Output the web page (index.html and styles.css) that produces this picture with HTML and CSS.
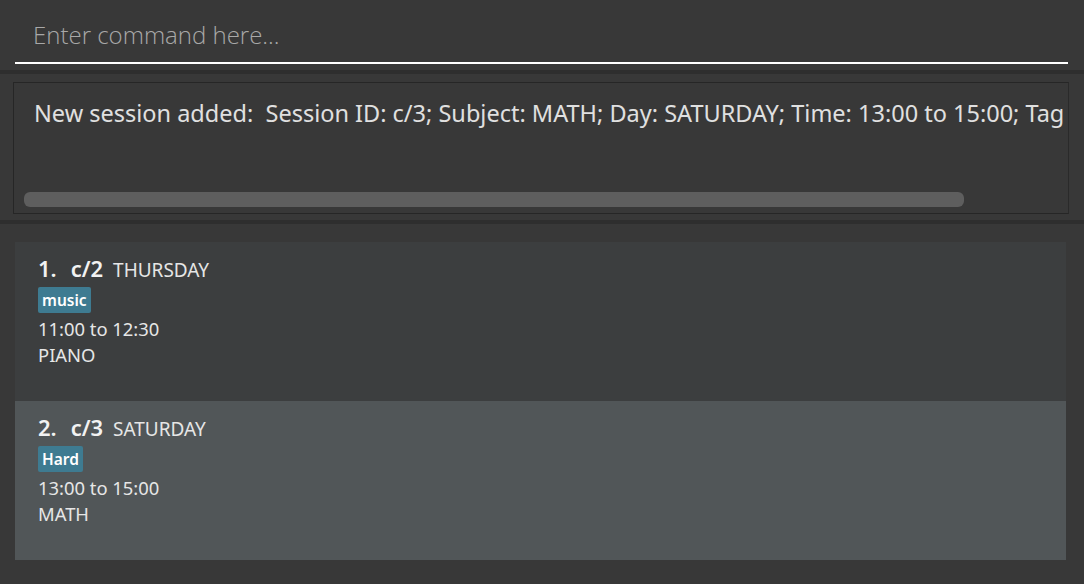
FILE: index.html
```html
<!DOCTYPE html>
<html>
<head>
<meta charset="utf-8">
<link rel="stylesheet" href="styles.css">
</head>
<body>
<div class="app">
  <div class="command-pane">
    <div class="command-field">Enter command here...</div>
  </div>
  <div class="separator"></div>
  <div class="result-pane">
    <div class="result-box">
      <div class="result-text">New session added:&nbsp; Session ID: c/3; Subject: MATH; Day: SATURDAY; Time: 13:00 to 15:00; Tag</div>
      <div class="scroll-track"><div class="scroll-thumb"></div></div>
    </div>
  </div>
  <div class="separator"></div>
  <div class="list-pane">
    <div class="card">
      <div class="card-title"><span class="idx">1.</span><span class="sid">c/2</span><span class="day">THURSDAY</span></div>
      <div class="tags"><span class="tag">music</span></div>
      <div class="line">11:00 to 12:30</div>
      <div class="line">PIANO</div>
    </div>
    <div class="card selected">
      <div class="card-title"><span class="idx">2.</span><span class="sid">c/3</span><span class="day">SATURDAY</span></div>
      <div class="tags"><span class="tag">Hard</span></div>
      <div class="line">13:00 to 15:00</div>
      <div class="line">MATH</div>
    </div>
  </div>
</div>
</body>
</html>
```

FILE: styles.css
```css
html, body {
  margin: 0;
  padding: 0;
  background: #383838;
}
body {
  width: 1084px;
  height: 584px;
  overflow: hidden;
  font-family: "Noto Sans", "Open Sans", sans-serif;
}
.app {
  display: flex;
  flex-direction: column;
  height: 584px;
}
.command-pane {
  height: 70px;
  padding: 0 16px 0 15px;
  display: flex;
  flex-direction: column;
}
.command-field {
  height: 64px;
  box-sizing: border-box;
  border-bottom: 2px solid #ffffff;
  padding-left: 18px;
  padding-top: 19px;
  font-family: "Open Sans", "Noto Sans", sans-serif;
  font-weight: 300;
  font-size: 24px;
  line-height: 32px;
  color: #a8a8a8;
}
.separator {
  height: 4px;
  background: #2e2e2e;
}
.result-pane {
  height: 146px;
  padding: 8px 15px 0 13px;
  box-sizing: border-box;
}
.result-box {
  height: 132px;
  box-sizing: border-box;
  border: 1px solid #262626;
  border-right-color: #2a2a2a;
  position: relative;
  overflow: hidden;
}
.result-text {
  padding: 14px 0 0 20px;
  font-size: 23.5px;
  line-height: 32px;
  color: #e0e0e0;
  white-space: nowrap;
}
.scroll-track {
  position: absolute;
  left: 10px;
  right: 0;
  bottom: 6px;
  height: 15px;
}
.scroll-thumb {
  width: 940px;
  height: 15px;
  background: #5e5e5e;
  border-radius: 6px;
}
.list-pane {
  flex: 1;
  padding: 18px 18px 24px 15px;
  display: flex;
  flex-direction: column;
}
.card {
  height: 159px;
  box-sizing: border-box;
  background: #3c3e3f;
  padding: 11px 0 0 23px;
  color: #eeeeee;
}
.card.selected {
  background: #515658;
}
.card-title {
  display: flex;
  align-items: baseline;
  height: 30px;
}
.idx {
  font-size: 22px;
  font-weight: 600;
  margin-right: 14px;
  color: #f2f2f2;
}
.sid {
  font-size: 22px;
  font-weight: 600;
  margin-right: 10px;
  color: #f2f2f2;
}
.day {
  font-size: 19px;
  color: #e6e6e6;
}
.tags {
  display: flex;
  margin-top: 4px;
  margin-bottom: 3px;
}
.tag {
  background: #3e7b91;
  color: #ffffff;
  font-size: 15.5px;
  font-weight: 600;
  line-height: 26px;
  padding: 0 4px;
  border-radius: 2px;
}
.line {
  font-size: 18.4px;
  line-height: 26px;
  color: #e6e6e6;
}
```
